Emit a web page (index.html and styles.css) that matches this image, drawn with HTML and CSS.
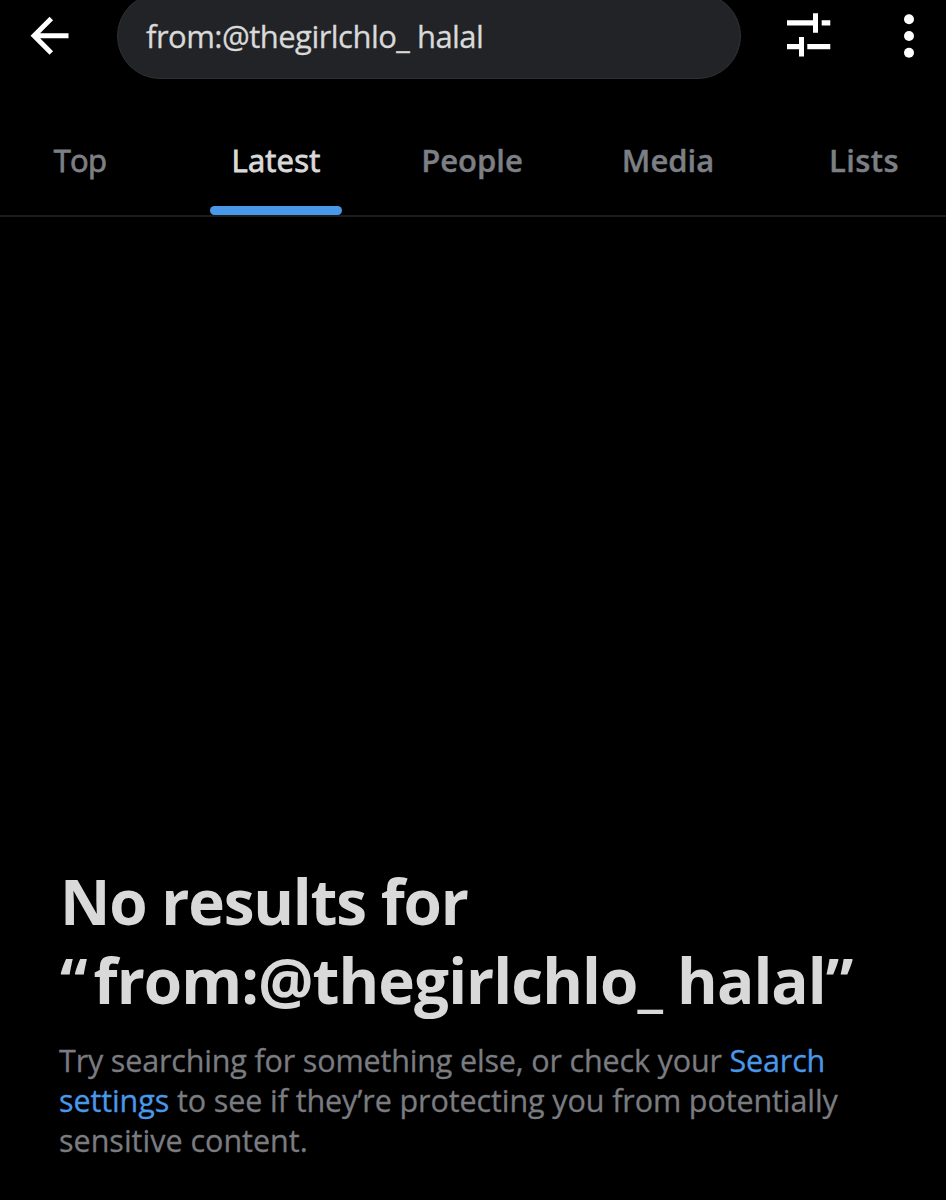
FILE: index.html
```
<!DOCTYPE html>
<html lang="en">
<head>
	<meta charset="utf-8">
	<meta name="viewport" content="width=device-width">
	<title>Search</title>
	<link rel="stylesheet" href="styles.css">
</head>
<body>

	<header class="topbar">
		<a class="back" href="#" aria-label="Back">
			<svg width="40" height="40" viewBox="0 0 40 40">
				<path d="M39.5 19.8H5M22.3 2.6L5.1 19.8L22.3 37"/>
			</svg>
		</a>
		<div class="search"><span class="query">from:@thegirlchlo_ halal</span></div>
		<a class="filters" href="#" aria-label="Search filters">
			<svg width="44" height="44" viewBox="0 0 44 44">
				<path d="M0 6.3h26v-7h5v19.4h-5v-7.2H0zM34.7 6.3h8.6v5.2h-8.6zM0 30.1h12v-7h5v19.4h-5v-7.2H0zM20.3 30.1h23v5.2h-23z"/>
			</svg>
		</a>
		<a class="more" href="#" aria-label="More">
			<svg width="10" height="44" viewBox="0 0 10 44">
				<circle cx="5" cy="5.3" r="5"/>
				<circle cx="5" cy="22" r="5"/>
				<circle cx="5" cy="38.7" r="5"/>
			</svg>
		</a>
	</header>

	<nav class="tabs">
		<a class="tab top" href="#"><span>Top</span></a>
		<a class="tab active" href="#"><span>Latest</span></a>
		<a class="tab people" href="#"><span>People</span></a>
		<a class="tab media" href="#"><span>Media</span></a>
		<a class="tab lists" href="#"><span>Lists</span></a>
	</nav>

	<main class="empty">
		<h1><span class="intro">No results for</span><br><span class="term"><span class="quote">“</span>from:@thegirlchlo_ halal”</span></h1>
		<p>
			<span class="line-one">Try searching for something else, or check your <a href="#">Search</a></span><br>
			<span class="line-two"><a href="#">settings</a> to see if they’re protecting you from potentially</span><br>
			<span class="line-three">sensitive content.</span>
		</p>
	</main>

</body>
</html>
```

FILE: styles.css
```
* {
	box-sizing: border-box;
	padding: 0;
	margin: 0;
}

body {
	height: 1200px;
	overflow: hidden;
	background-color: #000;
	color: #D9D9D9;
	font-family: "Open Sans", "Noto Sans", sans-serif;
	display: flex;
	flex-direction: column;
}

a {
	color: #4A99E9;
	text-decoration: none;
}

svg {
	display: block;
	overflow: visible;
	fill: #FFF;
}

/* Top bar, scrolled slightly out of view */
.topbar {
	display: flex;
	align-items: center;
	flex-shrink: 0;
	height: 86px;
	margin-top: -7px;
	padding-left: 29px;
}

.back svg {
	fill: none;
	stroke: #FFF;
	stroke-width: 5;
}

.search {
	display: flex;
	align-items: center;
	width: 624px;
	height: 86px;
	margin-left: 48px;
	padding-left: 28px;
	border: 1px solid #2F3133;
	border-radius: 43px;
	background-color: #222327;
	font-size: 31px;
	letter-spacing: -.53px;
	white-space: nowrap;
	-webkit-text-stroke: .3px;
}

.filters {
	margin-left: 46px;
}

.more {
	margin-left: 73px;
}

/* Tabs */
.tabs {
	display: flex;
	flex-shrink: 0;
	height: 138px;
	margin: 0 -16px 0 -18px;
	border-bottom: 2px solid #1C1C1D;
}

.tab {
	position: relative;
	flex: 1;
	padding-top: 60px;
	color: #7C7F84;
	font-size: 31px;
	font-weight: 600;
	line-height: 42px;
	text-align: center;
	-webkit-text-stroke: .4px;
}
.tab.top {
	font-weight: 400;
	letter-spacing: -.7px;
	-webkit-text-stroke: .8px;
}
.tab.active {
	color: #D9D9D9;
	font-weight: 400;
	letter-spacing: .2px;
	-webkit-text-stroke: .9px;
}
.tab.lists {
	letter-spacing: .4px;
}
.tab.active::after {
	content: "";
	position: absolute;
	bottom: 0;
	left: 50%;
	width: 132px;
	height: 9px;
	margin-left: -66px;
	border-radius: 5px;
	background-color: #4A99E9;
}

/* Empty state */
.empty {
	padding: 645px 0 0 60px;
	white-space: nowrap;
}

.empty h1 {
	font-size: 62px;
	font-weight: 700;
	line-height: 79px;
}

.intro {
	letter-spacing: -1.2px;
}

.term {
	letter-spacing: -.95px;
}

.quote {
	letter-spacing: 6px;
}

.empty p {
	margin: 20px 0 0 -1px;
	color: #7A7C80;
	font-size: 30.5px;
	line-height: 40px;
	-webkit-text-stroke: .3px;
}

.line-one {
	letter-spacing: -.16px;
}

.line-two {
	letter-spacing: -.1px;
}
```
